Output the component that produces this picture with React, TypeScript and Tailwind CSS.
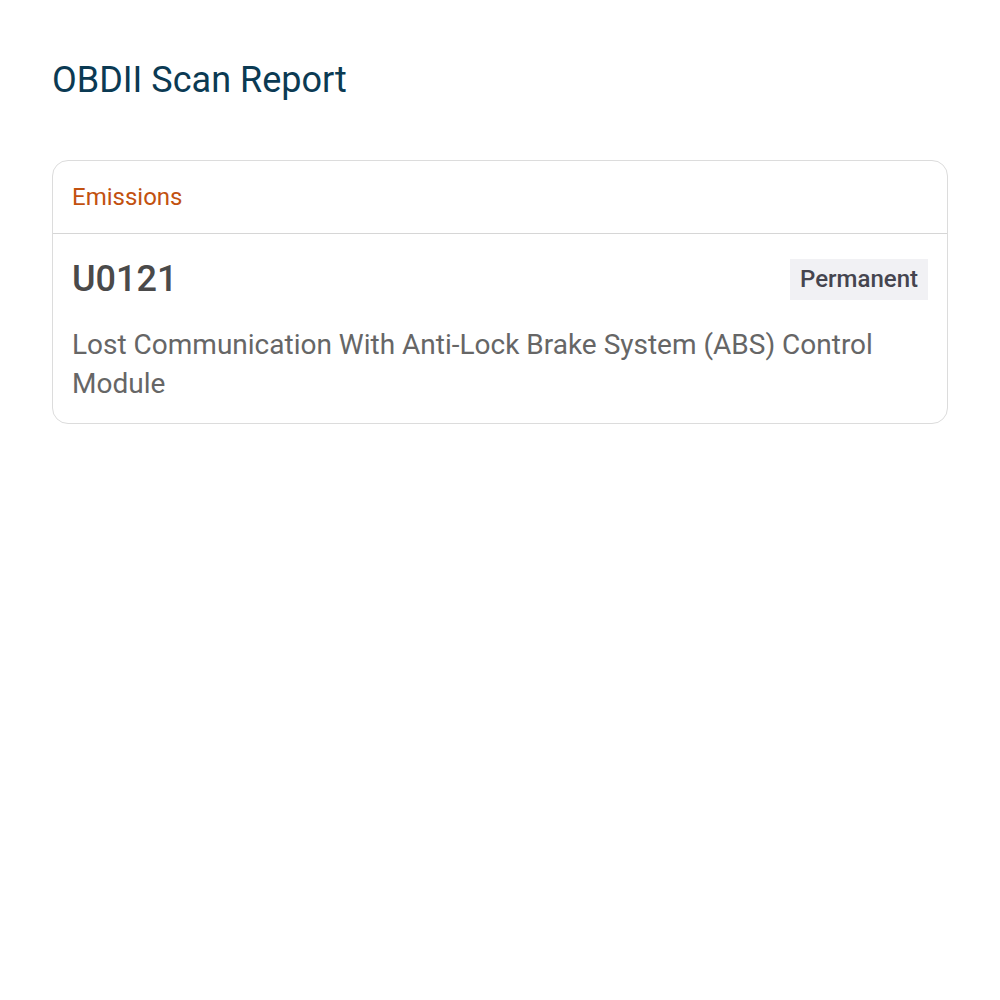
export default function App() {
  return (
    <div className="min-h-screen bg-white px-[52px] pt-[57px]" style={{ fontFamily: 'Roboto, "Noto Sans", sans-serif' }}>
      <h1 className="text-[36px] leading-[46px] text-[#0b3a53]">OBDII Scan Report</h1>

      <div className="mt-[57px] rounded-[16px] border border-[#dcdcdc] bg-white">
        <div className="px-[19px] h-[73px] flex items-center border-b border-[#d6d6d6]">
          <span className="text-[24px] text-[#c2510f]">Emissions</span>
        </div>
        <div className="px-[19px] pt-[24px] pb-[20px]">
          <div className="flex items-center justify-between">
            <span className="text-[36px] font-medium text-[#4a4a4a] leading-[42px]">U0121</span>
            <span className="bg-[#f1f1f4] px-[10px] h-[41px] flex items-center text-[24px] font-medium text-[#45454f]">Permanent</span>
          </div>
          <p className="mt-[25px] text-[28px] leading-[39px] text-[#666666]">
            Lost Communication With Anti-Lock Brake System (ABS) Control Module
          </p>
        </div>
      </div>
    </div>
  );
}
